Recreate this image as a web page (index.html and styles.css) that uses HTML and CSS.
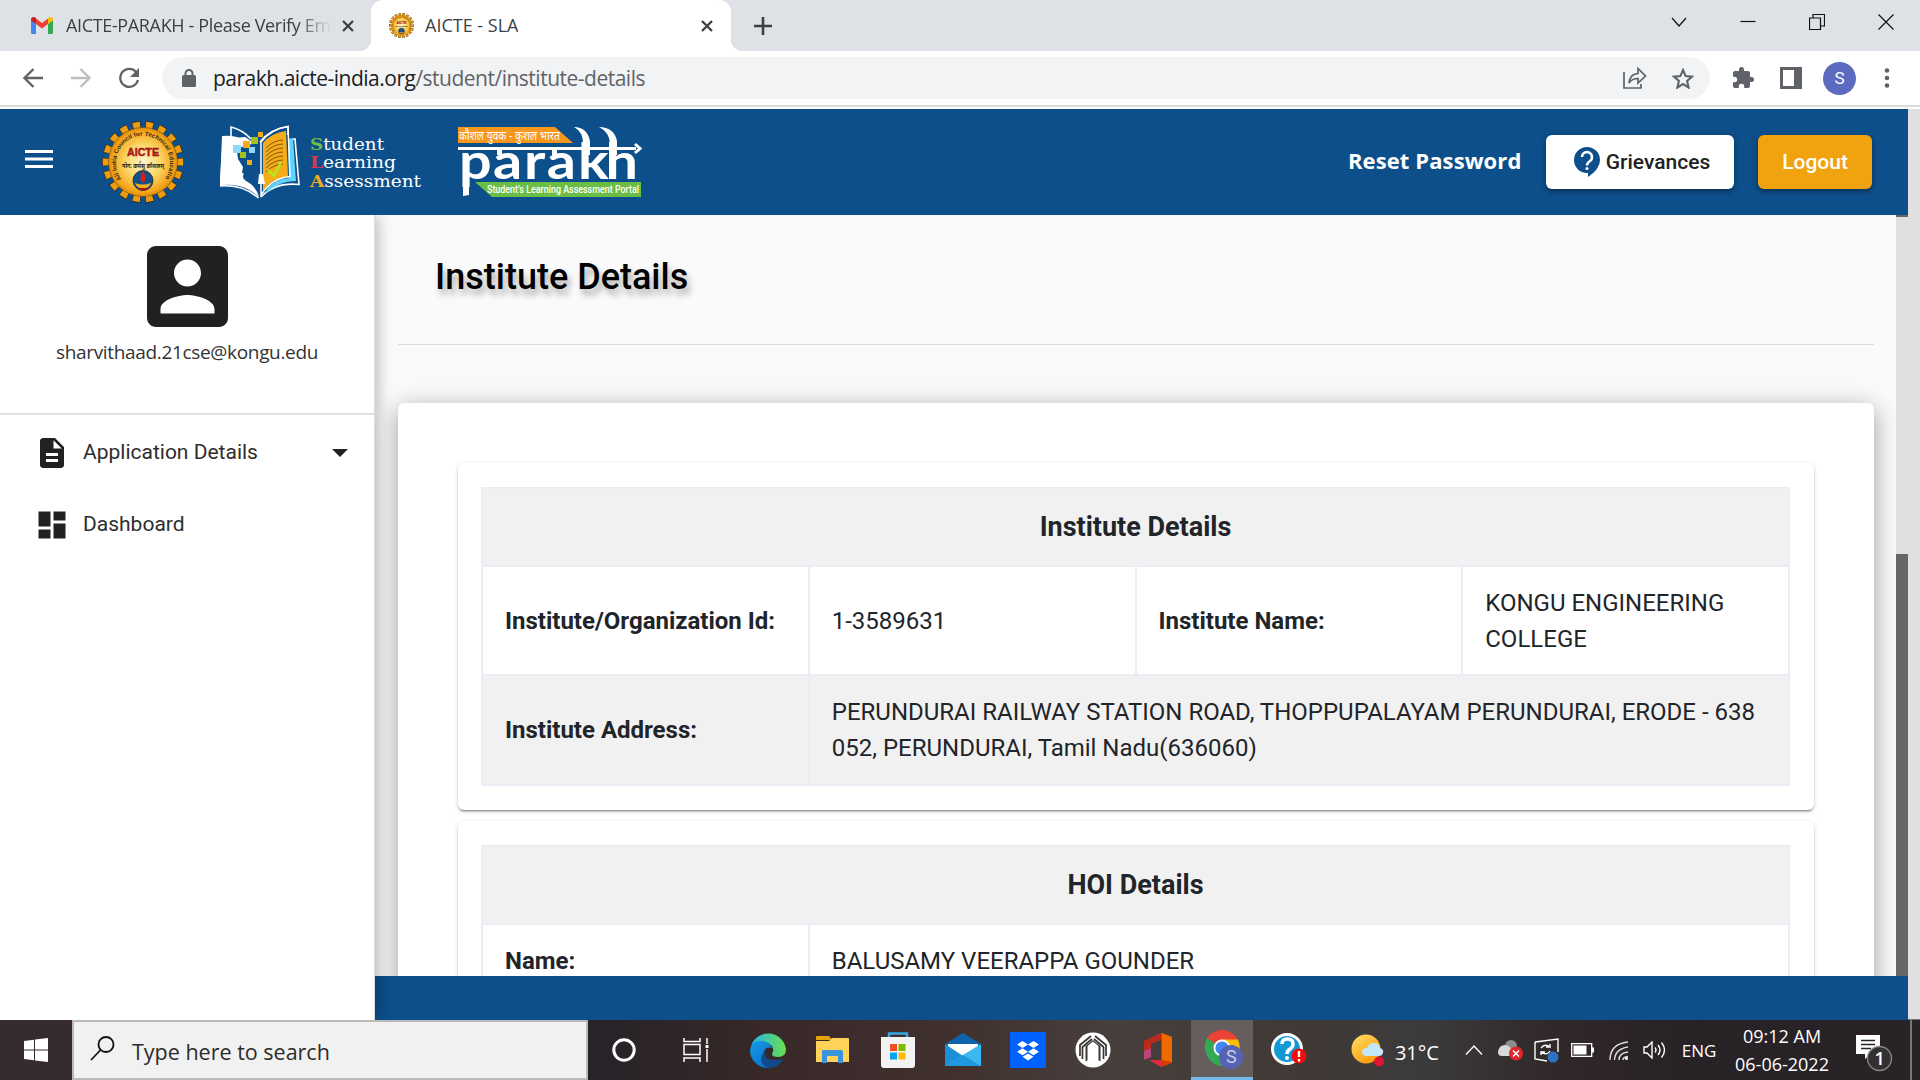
FILE: index.html
```html
<!DOCTYPE html>
<html lang="en">
<head>
<meta charset="utf-8">
<title>AICTE - SLA</title>
<link rel="stylesheet" href="styles.css">
</head>
<body>
<svg class="defs" width="0" height="0">
  <defs>
    <radialGradient id="gold"><stop offset="0" stop-color="#fff6cf"/><stop offset=".55" stop-color="#fbd667"/><stop offset="1" stop-color="#f2a012"/></radialGradient>
    <path id="ring" d="M19.6 58.2A27 27 0 1 1 62.4 58.2"/>
    <symbol id="gear" viewBox="0 0 82 82">
      <circle cx="41" cy="41" r="37" fill="none" stroke="#33291a" stroke-width="8" pathLength="180" stroke-dasharray="6.2 3.8" stroke-dashoffset="3.1"/>
      <circle cx="41" cy="41" r="36.6" fill="none" stroke="#ed9b10" stroke-width="7.4" pathLength="180" stroke-dasharray="5.4 4.6" stroke-dashoffset="2.7"/>
      <circle cx="41" cy="41" r="34.5" fill="#e9960f" stroke="#6b4a10" stroke-width=".6"/>
      <circle cx="41" cy="41" r="32" fill="url(#gold)"/>
      <text class="ring-text"><textPath href="#ring" textLength="122" lengthAdjust="spacingAndGlyphs">All India Council for Technical Education</textPath></text>
      <text x="25" y="35" class="aicte" textLength="32" lengthAdjust="spacingAndGlyphs">AICTE</text>
      <text x="20" y="46.500" class="motto" textLength="42" lengthAdjust="spacingAndGlyphs">योग: कर्मसु कौशलम्</text>
      <circle cx="41" cy="59.500" r="10" fill="#12508a" stroke="#222" stroke-width=".8"/>
      <path d="M41 50q4 6 1.500 11h-3Q37 56 41 50z" fill="#d81e1e"/><path d="M33 62q8 3 16 0q-2 5-6 5h-4q-4 0-6-5z" fill="#f3b21c"/><path d="M36 67h10l-2 2h-6z" fill="#b11"/>
    </symbol>
  </defs>
</svg>
<div class="screen">
  <div class="tabs">
    <div class="tab tab-idle">
      <svg width="22" height="17" viewBox="0 0 22 17"><path fill="#4285f4" d="M0 2.500V15.500q0 1.500 1.500 1.500H5V7z"/><path fill="#34a853" d="M22 2.500V15.500q0 1.500-1.500 1.500H17V7z"/><path fill="#ea4335" d="M5 1.500l6 4.500 6-4.500V7l-6 4.600L5 7z"/><path fill="#c5221f" d="M0 2.800Q0 0 2.500 0 4 0 5 1.300V7L0 3.500z"/><path fill="#fbbc04" d="M22 2.800Q22 0 19.500 0 18 0 17 1.300V7l5-3.500z"/></svg>
      <span class="tab-title">AICTE-PARAKH - Please Verify Em</span>
      <svg class="x" width="12" height="12" viewBox="0 0 12 12"><path d="M1 1l10 10M11 1L1 11"/></svg>
    </div>
    <div class="tab tab-active">
      <svg width="25" height="25"><use href="#gear"/></svg>
      <span class="tab-title">AICTE - SLA</span>
      <svg class="x" width="12" height="12" viewBox="0 0 12 12"><path d="M1 1l10 10M11 1L1 11"/></svg>
    </div>
    <svg class="plus" width="18" height="18" viewBox="0 0 18 18"><path d="M9 0v18M0 9h18"/></svg>
    <div class="window-controls">
      <svg width="16" height="10" viewBox="0 0 16 10"><path d="M1 1l7 8 7-8"/></svg>
      <svg width="16" height="10" viewBox="0 0 16 10"><path d="M.5 4.500h15"/></svg>
      <svg width="16" height="16" viewBox="0 0 16 16"><path d="M.5 4h11v11.500H.5zM4 4V.5h11.500V12H12"/></svg>
      <svg width="16" height="16" viewBox="0 0 16 16"><path d="M.5.5l15 15M15.500.5l-15 15"/></svg>
    </div>
  </div>
  <div class="toolbar">
    <div class="nav">
      <svg width="20" height="20" viewBox="0 0 20 20"><path d="M20 10H2M10.500 1L1.500 10l9 9"/></svg>
      <svg class="dim" width="20" height="20" viewBox="0 0 20 20"><path d="M0 10h18M9.500 1l9 9-9 9"/></svg>
      <svg width="22" height="22" viewBox="0 0 22 22"><path d="M18.500 5.500A9 9 0 1 0 20 13"/><path class="solid" d="M21 1v9h-9z"/></svg>
    </div>
    <div class="omnibox">
      <svg width="14" height="18" viewBox="0 0 14 18"><rect y="6" width="14" height="12" rx="1.500" fill="#5f6368"/><path d="M3.500 7V4.500a3.500 3.500 0 0 1 7 0V7" fill="none" stroke="#5f6368" stroke-width="2"/></svg>
      <span class="url"><b>parakh.aicte-india.org</b>/student/institute-details</span>
      <div class="omni-actions">
        <svg width="24" height="22" viewBox="0 0 24 22" class="line"><path d="M1 5v16h17v-4"/><path d="M6 16q1-9 9-9.500V1.500L22.500 9 15 16v-4.500q-6 0-9 4.500z"/></svg>
        <svg width="22" height="21" viewBox="0 0 22 21" class="line thick"><path d="M11 2l2.600 6.100 6.400.6-4.900 4.300 1.500 6.500L11 16.100l-5.600 3.400 1.500-6.500L2 8.700l6.400-.6z"/></svg>
      </div>
    </div>
    <div class="extras">
      <svg width="22" height="22" viewBox="1 1 22 22"><path fill="#5f6368" d="M20.500 11H19V7c0-1.100-.9-2-2-2h-4V3.500a2.500 2.500 0 0 0-5 0V5H4c-1.100 0-2 .9-2 2v3.800h1.500a2.700 2.700 0 0 1 0 5.400H2V20c0 1.100.9 2 2 2h3.800v-1.500a2.700 2.700 0 0 1 5.400 0V22H17c1.100 0 2-.9 2-2v-4h1.500a2.500 2.500 0 0 0 0-5z"/></svg>
      <svg width="22" height="22" viewBox="0 0 22 22"><path fill="#5f6368" fill-rule="evenodd" d="M0 0h22v22H0zM3 3v16h11V3z"/></svg>
      <span class="profile">S</span>
      <svg width="6" height="20" viewBox="0 0 6 20" fill="#5f6368"><circle cx="3" cy="2.500" r="2.300"/><circle cx="3" cy="10" r="2.300"/><circle cx="3" cy="17.500" r="2.300"/></svg>
    </div>
  </div>

  <div class="viewport">
    <div class="page">
      <header class="header">
        <svg class="burger" width="28" height="18" viewBox="0 0 28 18"><path d="M0 1.500h28M0 9h28M0 16.500h28" stroke="#fff" stroke-width="3"/></svg>
        <svg class="logo-gear" width="82" height="82"><use href="#gear"/></svg>
        <svg class="logo-sla" width="202" height="76" viewBox="220 124 202 76">
          <path fill="#fff" d="M222 136q9-1 17 1.500l6-.5q6 3 10 9l-2 6 3 9-2 4q2 5-2 8l-8 1q-3 3 2 7 10 5 13 16-10-9-20-11-10-2-19-.5z"/>
          <path fill="#0d4f8a" d="M238 150q6-7 18-6v12q3 6 2 9l-3 1q2 6-2 8h-9q-4-2-3-9l-4-6q-2-5 1-9z"/>
          <path fill="#fff" d="M222 138q12-1 18 5l-3 8 1 8 5 8q-1 8-5 13 8 2 14 6l-6 0q-10-3-24-2z"/>
          <path fill="none" stroke="#fff" stroke-width="1.600" d="M231 137V127q12 3 20 12M224 137q-2 20-3.500 49 22-2 38 12M260 142q10-13 28-15.500V135M261 197q14-15 38-12.500L295 139l-5 1"/>
          <path fill="#5fd3fb" d="M288 139l5-1 3 43q-18 0-31 13l2-5q8-10 22-11z"/>
          <path fill="#f6ac18" d="M263 143q8-10 23-12l2 46q-16 1-25 14z"/>
          <path fill="none" stroke="#fff" stroke-width="1.500" d="M261 142q10-13 27-15.500l2 50Q272 178 261 195z"/>
          <path fill="none" stroke="#7a5715" stroke-width="1" d="M266 148q8-8 17-8M266 152q8-8 17-8M266 156q8-8 17-8M266 160q8-8 17-8M266 164q8-8 17-8M266 168q8-8 17-8M266 172q8-8 17-8"/>
          <path fill="none" stroke="#b4e61b" stroke-width="2.600" d="M268 170l6 6 7-14"/><path fill="#fff" d="M259 174h4l2 10h-7z"/>
          <path fill="#8ed8f8" d="M233 145h8v8h-8zM249 147h6v6h-6z"/><path fill="#f6ac18" d="M243 141h7v7h-7zM258 132h5v5h-5zM247 160h5v5h-5z"/><path fill="#a8bf20" d="M251 137h7v7h-7zM240 152h6v6h-6z"/>
          <g class="sla-text"><text x="310" y="149.500" textLength="74" lengthAdjust="spacingAndGlyphs"><tspan class="initial" fill="#6cbd45">S</tspan>tudent</text><text x="310" y="168" textLength="86" lengthAdjust="spacingAndGlyphs"><tspan class="initial" fill="#e2344c">L</tspan>earning</text><text x="310" y="187" textLength="111" lengthAdjust="spacingAndGlyphs"><tspan class="initial" fill="#f6ac18">A</tspan>ssessment</text></g>
        </svg>
        <svg class="logo-parakh" width="184" height="72" viewBox="458 126 184 72">
          <path fill="#f7981d" d="M458 127h97l18 16H458z"/>
          <text class="hindi" x="459" y="139.500" textLength="101" lengthAdjust="spacingAndGlyphs">कौशल युवक - कुशल भारत</text>
          <path fill="#6abd45" d="M475 182h166v15H492z"/>
          <text class="tagline" x="487" y="193" textLength="152" lengthAdjust="spacingAndGlyphs">Student’s Learning Assessment Portal</text>
          <path d="M458 148.500h178M635 144l5 4.500-5 4.500" fill="none" stroke="#fff" stroke-width="3"/>
          <text class="wordmark" transform="scale(1.15 1)" x="399.1 428.7 455.700 475.500 502.600 526.500" y="179">parakh</text>
          <path fill="#fff" d="M574 127q13 0 16 14v14h-7v-12q0-11-9-16zM599 127q15 0 18 14v14h-7v-12q-1-11-11-16zM497 149h5v6h-5zM552 149h5v6h-5z"/><path fill="#fff" d="M463 176h6v19l-6 1z"/>
        </svg>
        <div class="header-actions">
          <a class="reset">Reset Password</a>
          <button class="btn btn-white"><svg width="26" height="30" viewBox="0 0 26 30"><path fill="#0d4f8a" d="M13 0a13 13 0 0 1 13 13q0 9-12 17v-4h-1A13 13 0 0 1 13 0z"/><path d="M8 10a5 5 0 1 1 8 4q-3 2-3 4.500" fill="none" stroke="#fff" stroke-width="2.500"/><circle cx="13" cy="21.500" r="1.500" fill="#fff"/></svg><span class="griev">Grievances</span></button>
          <button class="btn btn-gold"><span>Logout</span></button>
        </div>
      </header>
      <div class="body">
        <aside class="sidebar">
          <div class="user">
            <svg width="81" height="81" viewBox="3 3 18 18"><path fill="#212121" d="M3 5v14c0 1.100.9 2 2 2h14c1.100 0 2-.9 2-2V5c0-1.100-.9-2-2-2H5c-1.100 0-2 .9-2 2zm12 4c0 1.660-1.340 3-3 3s-3-1.340-3-3 1.340-3 3-3 3 1.340 3 3zm-9 8c0-2 4-3.100 6-3.100s6 1.100 6 3.100v1H6v-1z"/></svg>
            <span class="email">sharvithaad.21cse@kongu.edu</span>
          </div>
          <nav class="menu">
            <a class="item"><svg width="36" height="36" viewBox="0 0 24 24"><path fill="#212121" d="M14 2H6c-1.100 0-2 .9-2 2v16c0 1.100.9 2 2 2h12c1.100 0 2-.9 2-2V8l-6-6zm2 16H8v-2h8v2zm0-4H8v-2h8v2zm-3-5V3.500L18.500 9H13z"/></svg><span>Application Details</span><svg class="caret" width="16" height="8" viewBox="0 0 16 8"><path fill="#212121" d="M0 0h16L8 8z"/></svg></a>
            <a class="item"><svg width="36" height="36" viewBox="0 0 24 24"><path fill="#212121" d="M3 13h8V3H3v10zm0 8h8v-6H3v6zm10 0h8V11h-8v10zm0-18v6h8V3h-8z"/></svg><span>Dashboard</span></a>
          </nav>
        </aside>
        <div class="content">
          <div class="scroller">
            <main class="main">
              <h1>Institute Details</h1>
              <div class="panel">
                <section class="card">
                  <table>
                    <tr class="head"><th colspan="4">Institute Details</th></tr>
                    <tr class="tall"><td class="key">Institute/Organization Id:</td><td>1-3589631</td><td class="key">Institute Name:</td><td>KONGU ENGINEERING COLLEGE</td></tr>
                    <tr class="tall alt"><td class="key">Institute Address:</td><td colspan="3">PERUNDURAI RAILWAY STATION ROAD, THOPPUPALAYAM PERUNDURAI, ERODE - 638 052, PERUNDURAI, Tamil Nadu(636060)</td></tr>
                  </table>
                </section>
                <section class="card">
                  <table>
                    <tr class="head"><th colspan="4">HOI Details</th></tr>
                    <tr><td class="key">Name:</td><td colspan="3">BALUSAMY VEERAPPA GOUNDER</td></tr>
                  </table>
                </section>
              </div>
            </main>
            <div class="inner-scroll"><div class="inner-thumb"></div></div>
          </div>
          <footer class="footer"></footer>
        </div>
      </div>
    </div>
    <div class="outer-scroll"></div>
  </div>

  <div class="taskbar">
    <div class="start"><svg width="24" height="24" viewBox="0 0 24 24" fill="#fff"><path d="M0 3l10-1.300V11.500H0zM11 1.500L24 0v11.500H11zM0 12.500h10v9.800L0 21zM11 12.500h13V24l-13-1.600z"/></svg></div>
    <div class="search"><svg width="25" height="25" viewBox="0 0 25 25" fill="none" stroke="#111" stroke-width="1.800"><circle cx="16" cy="8.500" r="7.500"/><path d="M10.500 14L1 24"/></svg><span>Type here to search</span></div>
    <div class="sys"><svg width="24" height="24" viewBox="0 0 24 24"><circle cx="12" cy="12" r="10.200" fill="none" stroke="#fff" stroke-width="3"/></svg></div>
    <div class="sys"><svg width="26" height="24" viewBox="0 0 26 24" fill="none" stroke="#fff" stroke-width="1.500"><path d="M1 0v3.500h16V0M1 6.500h16v10H1zM1 24v-4h16v4M24 0v6M24 11v13"/><path d="M22.500 7h3v3h-3z" fill="#fff" stroke="none"/></svg></div>
    <div class="apps">
      <div class="app"><svg width="36" height="36" viewBox="0 0 36 36"><defs><linearGradient id="e1" x2="1"><stop stop-color="#25b5ea"/><stop offset="1" stop-color="#68e04c"/></linearGradient><linearGradient id="e2" x2="1" y2="1"><stop stop-color="#159be5"/><stop offset="1" stop-color="#0a65c4"/></linearGradient></defs><path fill="url(#e1)" d="M1 14A18 18 0 0 1 36 17q0 8-8 8-6 0-6-3 3-5-1-9-7-6-20 1z"/><path fill="url(#e2)" d="M0 18Q1 9 10 9q9 0 12 7-8-2-8 6 1 9 14 10-4 4-10 4A18 18 0 0 1 0 18z"/><path fill="#114a8b" d="M15 18q-3 13 18 9-4 9-15 9Q6 30 15 18z"/></svg></div>
      <div class="app"><svg width="33" height="28" viewBox="0 0 33 28"><path fill="#e5a50a" d="M0 1q0-1 1-1h12l3 4h-16z"/><path fill="#ffd35a" d="M0 5h13l3-3h16q1 0 1 1v23H0z"/><path fill="#3794dd" d="M6 15q0-1 1-1h18q2 0 2 2v11h-5v-7H11v7H6z"/></svg></div>
      <div class="app"><svg width="36" height="36" viewBox="0 0 36 36"><path d="M9 7V1.500h18V7" fill="none" stroke="#35a9e0" stroke-width="2.500"/><path fill="#f3f3f3" d="M1 5h34v28q0 3-3 3H4q-3 0-3-3z"/><path fill="#f25022" d="M10 12h7v7h-7z"/><path fill="#7fba00" d="M18.500 12h7v7h-7z"/><path fill="#00a4ef" d="M10 20.500h7v7h-7z"/><path fill="#ffb900" d="M18.500 20.500h7v7h-7z"/></svg></div>
      <div class="app"><svg width="36" height="34" viewBox="0 0 36 34"><path fill="#0f63ad" d="M0 11L18 0l18 11v6H0z"/><path fill="#fff" d="M3 11h30v8L18 24 3 17z"/><path fill="#1c8fd8" d="M0 11l18 12v10H0z"/><path fill="#38b9ef" d="M36 11L18 22 0 33h36z"/><path fill="#1f98e0" d="M18 22l18 11H0z"/></svg></div>
      <div class="app"><svg width="36" height="36" viewBox="0 0 36 36"><path fill="#0061ff" d="M0 0h36v36H0z"/><path fill="#fff" d="M12.500 9l5.500 3.500-5.500 3.500L7 12.500zM23.500 9l5.500 3.500-5.500 3.500-5.500-3.500zM12.500 16.200l5.500 3.500-5.500 3.500L7 19.700zM23.500 16.200l5.500 3.500-5.500 3.500-5.500-3.500zM18 21.500l5.500 3.300L18 28.500l-5.500-3.700z"/></svg></div>
      <div class="app"><svg width="36" height="36" viewBox="0 0 36 36"><circle cx="18" cy="18" r="17.500" fill="#fff"/><path fill="#393635" d="M10.500 29.500V14L18 8l7.500 6v15.500L18 25z"/><path fill="#fff" d="M12.500 30.500V15l5.500-4.500 5.500 4.500v15.500L18 27z" transform="translate(0 -1)"/><path d="M16 4L5 13v11M20 4l11 9v11M7.500 27V15L17 7M28.500 27V15L19 7" fill="none" stroke="#393635" stroke-width="1.700"/></svg></div>
      <div class="app"><svg width="28" height="34" viewBox="0 0 28 34"><path fill="#d83b01" d="M17 0l11 4v26l-11 4z"/><path fill="#f06a00" d="M18 0l10 4v25l-10-2z"/><path fill="#b82b1d" d="M0 8L17 0v7L7 11v13L0 27z"/><path fill="#b7467a" d="M0 18l7-3v9l-7 3z"/><path fill="#e32a3a" d="M5 27h12v7z"/></svg></div>
      <div class="app app-active"><svg width="40" height="40" viewBox="0 0 40 40"><path fill="#ea4335" d="M18 18L3 8a18 18 0 0 1 31 2z"/><path fill="#fbbc04" d="M18 18l-1-8.500h17Q40 25 25 35z"/><path fill="#34a853" d="M18 18L3 8Q-2 18 4 28q6 8 14 8l5-9z"/><circle cx="18" cy="18" r="8.500" fill="#fff"/><circle cx="18" cy="18" r="6.600" fill="#4285f4"/><circle cx="27" cy="27" r="12" fill="#5463b4"/><text x="22" y="32.500" class="badge-s">S</text></svg></div>
      <div class="app app-help"><svg width="36" height="36" viewBox="0 0 36 36"><circle cx="16" cy="17" r="14.500" fill="#1397d5" stroke="#fff" stroke-width="3"/><path d="M11 12q0-5 5.500-5T22 12q0 3-3 5t-3 5" fill="none" stroke="#fff" stroke-width="3.500"/><circle cx="16" cy="26" r="2" fill="#fff"/><circle cx="28" cy="24" r="7.500" fill="#f10d0d"/><path d="M28 19v6M28 27v2.500" stroke="#fff" stroke-width="2.400"/></svg></div>
    </div>
    <div class="tray">
      <div class="weather"><svg width="34" height="36" viewBox="0 0 34 36"><defs><linearGradient id="sun" x2=".7" y2="1"><stop stop-color="#ffe066"/><stop offset="1" stop-color="#ff9a0a"/></linearGradient></defs><circle cx="15" cy="17" r="14.500" fill="url(#sun)"/><path fill="#c4e6fb" d="M16 24q-5 0-5-4t5-4q2-5 7-5t6 5q4 1 3 5-1 3-4 3z"/><circle cx="28" cy="29.500" r="5" fill="#dd1633"/></svg></div>
      <span class="temp">31°C</span>
      <div class="cell"><svg width="18" height="10" viewBox="0 0 18 10" class="w"><path d="M1 9.500L9 1l8 8.500"/></svg></div>
      <div class="cell"><svg width="25" height="21" viewBox="0 0 25 21"><circle cx="13" cy="6" r="6" fill="#8d8d8d"/><path fill="#d9d9d9" d="M0 12q1-7 7-7 4 0 7 5v6H4q-4 0-4-4z"/><circle cx="18" cy="13.500" r="7" fill="#e0262d"/><path d="M15 10.500l6 6M21 10.500l-6 6" stroke="#fff" stroke-width="1.500"/></svg></div>
      <div class="cell"><svg width="25" height="25" viewBox="0 0 25 25" class="w"><path d="M1 4l23-3v13M1 4v17l12 2M7 10q4-5 9-1V6M16 9h-4M16 13q-3 5-9 1v3M7 14h4"/><circle cx="19" cy="19" r="5.500" fill="#2b73c0" stroke="none"/></svg></div>
      <div class="cell"><svg width="23" height="14" viewBox="0 0 23 14"><path d="M.7.7h20v12.600H.7z" fill="none" stroke="#fff" stroke-width="1.300"/><path fill="#fff" d="M2.500 2.500h13v9h-13zM21 4.500h2v5h-2z"/></svg></div>
      <div class="cell"><svg width="19" height="19" viewBox="0 0 19 19" class="w"><path d="M1 19Q1 3 19 1M5.500 19Q6 8 19 6M10 19q0-7 9-8M14 19q0-3 5-3.500" opacity=".85"/><circle cx="17.500" cy="17.500" r="1.500" fill="#fff" stroke="none"/></svg></div>
      <div class="cell"><svg width="23" height="18" viewBox="0 0 23 18" class="w"><path d="M1 6h3l5-5v16l-5-5H1zM12 6.500q2 2.500 0 5M15 4q4 5 0 10M18.500 1.500q6 7.500 0 15"/></svg></div>
      <span class="lang">ENG</span>
      <div class="clock"><span>09:12 AM</span><span>06-06-2022</span></div>
      <div class="notif"><svg width="38" height="38" viewBox="0 0 38 38"><path fill="#fff" d="M1 1h24v19H15l-5 5v-5H1z"/><path d="M6 6.500h14M6 10.500h14M6 14.500h10" stroke="#282226" stroke-width="1.500"/><circle cx="24.500" cy="24.500" r="12" fill="#343032" stroke="#8b898a" stroke-width="1.300"/><text x="19.500" y="31" class="count">1</text></svg></div>
      <div class="peek"></div>
    </div>
  </div>
</div>
</body>
</html>
```
FILE: styles.css
```css
* { box-sizing: border-box; }
body { margin: 0; overflow: hidden; font-family: Roboto, sans-serif; color: #212529; }
svg { display: block; flex: none; }
.defs { position: absolute; }
.screen { width: 1920px; height: 1080px; display: flex; flex-direction: column; overflow: hidden; }

/* Browser tabs */
.tabs { height: 51px; background: #dee1e6; display: flex; align-items: center; font: 18px "Open Sans", sans-serif; color: #3c4043; flex: none; }
.tab { display: flex; align-items: center; height: 51px; }
.tab-idle { width: 371px; padding: 0 17px 0 31px; }
.tab-idle .tab-title { width: 265px; margin-left: 13px; letter-spacing: -.35px; -webkit-mask-image: linear-gradient(90deg, #000 87%, transparent); mask-image: linear-gradient(90deg, #000 87%, transparent); }
.tab-active { width: 360px; background: #fff; border-radius: 12px 12px 0 0; padding: 0 18px; position: relative; }
.tab-active::before, .tab-active::after { content: ""; position: absolute; bottom: 0; width: 12px; height: 12px; }
.tab-active::before { left: -12px; background: radial-gradient(circle at 0 0, transparent 12px, #fff 12.5px); }
.tab-active::after { right: -12px; background: radial-gradient(circle at 100% 0, transparent 12px, #fff 12.5px); }
.tab-active .tab-title { margin-left: 11px; letter-spacing: 0; }
.tab-title { overflow: hidden; white-space: nowrap; padding-bottom: 1px; }
.x { margin-left: auto; fill: none; stroke: #3c4043; stroke-width: 2.3; }
.plus { margin-left: 23px; fill: none; stroke: #3c4043; stroke-width: 2.6; }
.window-controls { margin-left: auto; width: 276px; padding-bottom: 8px; display: grid; grid-template-columns: repeat(4, 69px); align-items: center; justify-items: center; fill: none; stroke: #111; stroke-width: 1.2; }

/* Browser toolbar */
.toolbar { height: 58px; background: #fff; border-bottom: 2px solid #fff; box-shadow: inset 0 -2px #d9dbdd; display: flex; padding-top: 6px; align-items: flex-start; flex: none; }
.nav { width: 162px; height: 42px; padding-left: 9px; display: grid; grid-template-columns: repeat(3, 48px); align-items: center; justify-items: center; }
.nav svg { fill: none; stroke: #5f6368; stroke-width: 2.3; }
.nav .dim { stroke: #bcbec1; }
.nav .solid { fill: #5f6368; stroke: none; }
.omnibox { width: 1548px; height: 42px; border-radius: 21px; background: #f1f3f4; display: flex; align-items: center; padding: 0 16px 0 20px; }
.url { margin-left: 17px; font: 21px "Open Sans", sans-serif; color: #5f6368; letter-spacing: -.5px; }
.url b { font-weight: 400; color: #202124; }
.omni-actions { margin-left: auto; display: flex; gap: 25px; align-items: center; }
.line { fill: none; stroke: #5f6368; stroke-width: 1.7; }
.thick { stroke-width: 2.1; }
.extras { height: 42px; padding-left: 9px; display: grid; grid-template-columns: 48px 48px 49px 45px; align-items: center; justify-items: center; }
.profile { width: 33px; height: 33px; border-radius: 50%; background: #5c6bc0; color: #fff; display: grid; place-items: center; font-size: 17px; }

.viewport { height: 911px; display: flex; flex: none; }
.page { width: 1908px; display: flex; flex-direction: column; }
.outer-scroll { width: 12px; background: #e0e0e0; border-bottom: 1px solid #777; }

/* Site header */
.header { height: 106px; background: #0d4f8a; display: flex; align-items: center; padding: 0 36px 0 25px; flex: none; }
.burger { margin-bottom: 6px; }
.logo-gear { margin-left: 49px; }
.logo-sla { margin-left: 36px; }
.logo-parakh { margin-left: 36px; }
.ring-text { font: bold 6px "Liberation Sans", sans-serif; fill: #2d2410; }
.aicte { font: 900 10.5px "Liberation Sans", sans-serif; fill: #c3121b; stroke: #7d0d10; stroke-width: .4px; }
.motto { font: bold 7px "Noto Sans", sans-serif; fill: #2d2410; }
.sla-text { font: 17px "DejaVu Serif", serif; fill: #fff; }
.initial { font-weight: bold; }
.hindi { font: 12px "Noto Sans", sans-serif; fill: #fff; }
.tagline { font: 500 10px Roboto, sans-serif; fill: #fff; }
.wordmark { font: bold 50px Lato, sans-serif; fill: #fff; }
.header-actions { margin-left: auto; display: flex; align-items: center; }
.reset { font: bold 22px "Open Sans", sans-serif; color: #fff; white-space: nowrap; width: 174px; letter-spacing: .1px; margin-right: 24px; padding-bottom: 4px; }
.btn { border: 0; height: 54px; border-radius: 6px; display: flex; align-items: center; justify-content: center; font: 500 21px Roboto, sans-serif; box-shadow: 0 3px 4px rgba(0,0,0,.25), 0 1px 6px rgba(0,0,0,.15); padding: 0; white-space: nowrap; }
.btn-white { width: 188px; background: #fff; color: #212121; gap: 6px; padding-left: 4px; }
.btn-gold { width: 114px; margin-left: 24px; background: #f0a30f; color: #fff; }

/* Sidebar */
.body { display: flex; height: 805px; }
.sidebar { width: 375px; flex: none; background: #fff; border-right: 1px solid #ddd; box-shadow: 3px 0 14px rgba(0,0,0,.25); z-index: 1; clip-path: inset(0 -30px 0 0); }
.user { height: 200px; border-bottom: 2px solid #e0e0e0; padding: 31px 0 0; display: flex; flex-direction: column; align-items: center; }
.email { margin-top: 11px; font: 19px/28px "Open Sans", sans-serif; letter-spacing: -.33px; color: #333; white-space: nowrap; }
.menu { padding-top: 2px; }
.item { height: 72px; display: flex; align-items: center; padding: 0 26px 0 34px; font-size: 21px; color: #2d2d2d; }
.item span { margin-left: 13px; padding-bottom: 3px; white-space: nowrap; }
.caret { margin-left: auto; }

/* Main area */
.content { width: 1533px; display: flex; flex-direction: column; }
.scroller { height: 761px; display: flex; }
.main { width: 1521px; background: #fafafa; padding: 0 22px 0 23px; overflow: hidden; }
h1 { margin: 0 0 58px; height: 130px; padding: 38px 37px 0; border-bottom: 1px solid #dcdcdc; font: 500 36px/48px Roboto, sans-serif; color: #000; text-shadow: 3px 6px 6px rgba(0,0,0,.3); }
.panel { height: 700px; background: #fff; border-radius: 6px; padding: 60px; box-shadow: 0 7px 22px rgba(0,0,0,.3), 0 2px 34px rgba(0,0,0,.1); }
.card { padding: 24px 24px 24px 23px; border-radius: 6px; margin-bottom: 11px; box-shadow: 0 3px 1px -2px rgba(0,0,0,.2), 0 2px 2px rgba(0,0,0,.2), 0 1px 5px rgba(0,0,0,.12); }
table { width: 1309px; border-collapse: collapse; table-layout: fixed; }
td, th { border: 2px solid #e9eef5; padding: 0 22px; font-size: 24px; line-height: 36px; font-weight: 400; height: 74px; text-align: left; }
.head th { height: 78px; background: #f1f1f1; font-size: 27px; font-weight: 700; text-align: center; }
.tall td { height: 109px; }
.alt td { height: 110px; background: #f1f1f1; }
td.key { font-weight: 700; white-space: nowrap; }
.inner-scroll { width: 12px; background: #e0e0e0; padding-top: 337px; border-top: 2px solid #666; }
.inner-thumb { background: #666; height: 100%; }
.footer { height: 44px; background: #0d4f8a; }

/* Windows taskbar */
.taskbar { height: 60px; flex: none; display: flex; align-items: center; background: linear-gradient(90deg, #352b31 0, #352b31 70px, #272328 600px, #382828 760px, #40302e 950px, #473f3c 1110px, #403936 1300px, #3c3b3b 1420px, #302728 1560px, #272226 1700px, #292327 1920px); color: #fff; font-family: "Open Sans", sans-serif; }
.start { width: 72px; display: grid; place-items: center; }
.search { width: 516px; height: 60px; border: 2px solid #bababa; background: #f1f1f1; color: #2b2b2b; display: flex; align-items: center; padding-left: 16px; font-size: 21.5px; }
.search svg { margin-bottom: 4px; }
.search span { margin-left: 17px; padding-top: 2px; }
.sys { width: 72px; display: grid; place-items: center; }
.sys + .sys { width: 75px; padding-right: 3px; }
.apps { display: flex; height: 60px; }
.app { width: 65px; display: grid; place-items: center; }
.app-active { width: 62px; margin: 0 2px 0 1px; background: #655e5d; border-bottom: 3px solid #76b9ed; padding: 3px 0 0 3px; }
.app-help { padding-left: 3px; }
.badge-s { font: 18px Roboto, sans-serif; fill: #c9cde8; }
.tray { display: flex; align-items: center; margin-left: auto; width: 580px; height: 60px; }
.weather { width: 55px; display: grid; place-items: center; }
.temp { width: 61px; font-size: 20px; padding-top: 4px; letter-spacing: -.1px; }
.cell { width: 36px; display: grid; place-items: center; }
.w { fill: none; stroke: #fff; stroke-width: 1.4; }
.lang { width: 54px; text-align: center; font-size: 17px; }
.clock { width: 112px; display: flex; flex-direction: column; align-items: center; font-size: 18px; line-height: 28px; white-space: nowrap; }
.notif { width: 72px; display: grid; place-items: center; padding-top: 6px; }
.count { font: 600 18px "Open Sans", sans-serif; fill: #fff; }
.peek { width: 2px; height: 60px; background: #777; }
```
